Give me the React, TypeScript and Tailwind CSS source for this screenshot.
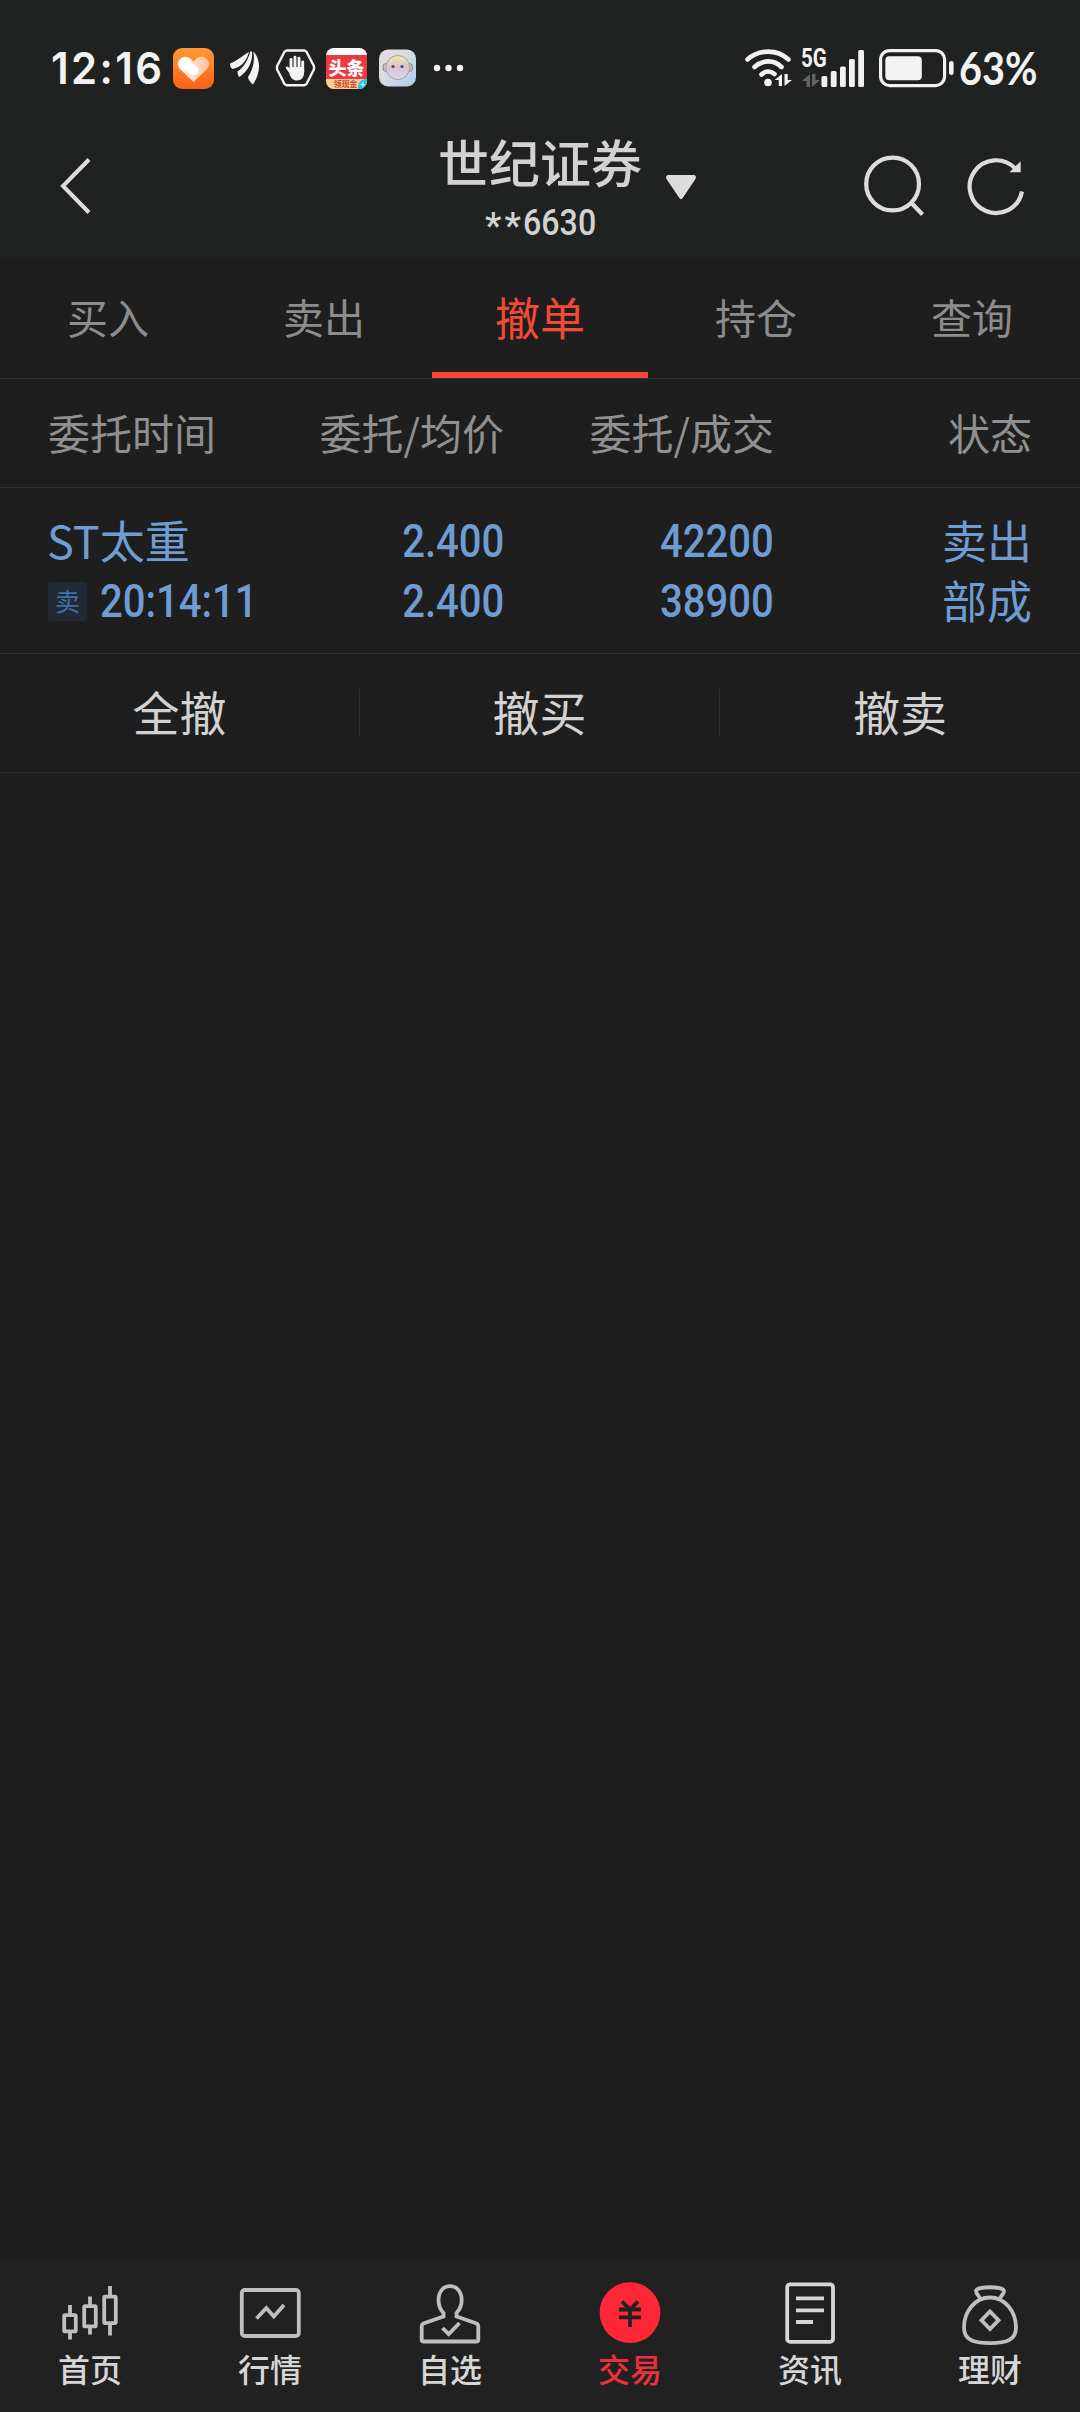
import { ReactNode } from 'react'
import clsx from 'clsx'

const tabs = ['买入', '卖出', '撤单', '持仓', '查询']
const actions = ['全撤', '撤买', '撤卖']

const orders = [
  {
    name: 'ST太重',
    side: '卖',
    time: '20:14:11',
    price: '2.400',
    avgPrice: '2.400',
    amount: '42200',
    filled: '38900',
    action: '卖出',
    status: '部成',
  },
]

function StatusBar() {
  return (
    <div className="flex h-[136px] items-center text-[#f2f2f2]">
      <div className="ml-[51px] w-[122px] shrink-0 whitespace-nowrap font-['Inter'] text-[44px] leading-none font-semibold">
        <span className="inline-block origin-left scale-x-[0.950] tracking-[2.500px]">12:16</span>
      </div>

      {/* health app */}
      <svg className="shrink-0" width="41" height="41" viewBox="0 0 41 41">
        <defs>
          <linearGradient id="health" x1="0" y1="0" x2="0" y2="1">
            <stop offset="0" stopColor="#fd9a34" />
            <stop offset="1" stopColor="#fb6218" />
          </linearGradient>
          <linearGradient id="heart" x1="0" y1="0" x2="1" y2="0">
            <stop offset="0" stopColor="#fff" />
            <stop offset="1" stopColor="#fdc193" />
          </linearGradient>
        </defs>
        <rect width="41" height="41" rx="9" fill="url(#health)" />
        <path
          d="M20.5 34 7.5 21.5C4 18 4 13.500 7.500 10.700c3.500-2.800 8-2.300 10.700.5l2.300 2.300 2.300-2.300c2.700-2.800 7.200-3.300 10.700-.5 3.500 2.800 3.500 7.300 0 10.800z"
          fill="url(#heart)"
        />
        <path d="m11 14 10 8.500" stroke="#fff" strokeWidth="9" strokeLinecap="round" />
      </svg>

      {/* wing */}
      <svg className="ml-4 shrink-0" width="30" height="34" viewBox="0 0 30 34" fill="currentColor">
        <path d="M0 12.500C7 10 12 5 19 .7 17 9 12 16 2.500 18 .5 17 0 15 0 12.500z" />
        <path d="M20.300.5h1.700C23 11 18 20 9.500 26 8 25 7.500 23 7.500 20.500 14 16 18 9 20.300.5z" />
        <path d="M23.300.5C31 8 31 22 23 33.500c-2-1.500-4.500-4-5-7.500C23 19 25 10 23.300.5z" />
      </svg>

      {/* blocked hand */}
      <svg className="ml-[15px] shrink-0" width="41" height="38" viewBox="0 0 41 38" fill="none" stroke="currentColor">
        <path d="M11.500 1.500h18l2 1.200 7.500 14.500v3L31.500 35l-2 1.200h-18l-2-1.200L2 20.200v-3L9.500 2.700z" strokeWidth="2.400" strokeLinejoin="round" />
        <path d="m12.300 19 4.500 6M16 10.500V22M20 8.300V21M24 9.300V21M27.700 13v10" strokeWidth="2.900" strokeLinecap="round" />
        <path d="M14.600 18h14.500v5c0 5.500-2.600 8.400-7 8.400-4.200 0-6-2.200-7.500-6z" fill="currentColor" stroke="none" />
      </svg>

      {/* toutiao */}
      <div className="ml-[10px] h-[41px] w-[41px] shrink-0 overflow-hidden rounded-[8px] bg-[#ec3a40] text-center font-['Noto_Sans_CJK_SC',sans-serif]">
        <div className="h-[7px] bg-white" />
        <div className="h-[24px] text-[18px] leading-[25px] font-black whitespace-nowrap text-white">头条</div>
        <div className="flex h-[10px] bg-[#f8cf98]">
          <span className="flex-1 pl-[7px] text-[8px] leading-[10px] font-bold whitespace-nowrap text-[#cf4526]">领现金</span>
          <span className="h-[12px] w-[9px] rounded-tl-[8px] bg-[#25c5ea] text-[8px] leading-[9px] font-bold text-white">+</span>
        </div>
      </div>

      {/* assistant face */}
      <svg className="ml-3 shrink-0" width="38" height="38" viewBox="0 0 38 38">
        <defs>
          <linearGradient id="faceBg" x1="0" y1="0" x2="1" y2="1">
            <stop offset="0" stopColor="#e6dfd6" />
            <stop offset="0.45" stopColor="#d8dce3" />
            <stop offset="1" stopColor="#a5ccf3" />
          </linearGradient>
          <linearGradient id="face" x1="0" y1="0" x2="0" y2="1">
            <stop offset="0" stopColor="#efe9a6" />
            <stop offset="0.5" stopColor="#d4c5d2" />
            <stop offset="1" stopColor="#d9d6ee" />
          </linearGradient>
        </defs>
        <rect width="37" height="37" y="0.500" rx="9" fill="url(#faceBg)" />
        <ellipse cx="6.500" cy="18.500" rx="2.500" ry="4" fill="#c3c3c8" stroke="#89858a" />
        <ellipse cx="31" cy="18.500" rx="2.500" ry="4" fill="#c3c3c8" stroke="#89858a" />
        <circle cx="18.800" cy="18.500" r="12" fill="url(#face)" stroke="#a5a0a0" />
        <circle cx="14" cy="17.500" r="1.600" fill="#6d4048" />
        <circle cx="23" cy="17.500" r="1.600" fill="#39507a" />
      </svg>

      <svg className="ml-4 shrink-0" width="32" height="8" viewBox="0 0 32 8" fill="currentColor">
        <circle cx="4" cy="4" r="3.200" />
        <circle cx="15.500" cy="4" r="3.200" />
        <circle cx="27" cy="4" r="3.200" />
      </svg>

      {/* wifi */}
      <svg className="ml-auto shrink-0" width="48" height="40" viewBox="0 0 48 40" fill="none" stroke="currentColor">
        <path d="M2.500 11.500C14 1 32 1 43.500 11.500M9.500 19C18 11.500 29 11.500 36.500 19M16.500 26.500c4-3.700 9-3.700 13-.5" strokeWidth="4.600" strokeLinecap="round" />
        <circle cx="23" cy="34.500" r="3.800" fill="currentColor" stroke="none" />
        <path d="M37 26v12h-3.200v-6H29.500zM39.500 38V26h3.200v6H47z" fill="currentColor" stroke="none" />
      </svg>

      {/* mobile signal */}
      <div className="ml-2 flex h-[40px] w-[62px] shrink-0 items-end">
        <div className="w-[20px]">
          <div className="origin-left scale-x-[0.820] font-['Roboto'] text-[25px] leading-[20px] font-bold">5G</div>
          <svg className="mt-[5px]" width="20" height="14" viewBox="0 0 20 14" fill="#626362">
            <path d="M9 0v13H5.500V7H1zM11 13V0h3.500v6H19z" />
          </svg>
        </div>
        <svg className="shrink-0" width="46" height="40" viewBox="0 0 46 40" fill="currentColor">
          <rect x="0.500" y="28" width="5.800" height="11" rx="1.500" />
          <rect x="9.800" y="23" width="5.800" height="16" rx="1.500" />
          <rect x="19" y="18.500" width="5.800" height="20.500" rx="1.500" />
          <rect x="28" y="11" width="5.800" height="28" rx="1.500" />
          <rect x="37.200" y="2" width="5.800" height="37" rx="1.500" />
        </svg>
      </div>

      {/* battery */}
      <svg className="ml-[16px] shrink-0" width="76" height="40" viewBox="0 0 76 40" fill="none">
        <rect x="1.600" y="2.600" width="64" height="35" rx="9" stroke="currentColor" strokeWidth="3.200" />
        <rect x="6.300" y="8.300" width="36.500" height="24" rx="4" fill="currentColor" />
        <rect x="70" y="13" width="4.600" height="14" rx="2.300" fill="currentColor" />
      </svg>
      <div className="mr-[43px] ml-[4px] w-[78px] shrink-0 font-['Lato'] text-[45px] leading-none font-bold">
        <span className="inline-block origin-left scale-x-[0.880]">63%</span>
      </div>
    </div>
  )
}

function Header() {
  return (
    <header className="flex h-[122px] text-[#d2d2d2]">
      <div className="flex h-[100px] w-[400px] items-center pl-[58px]">
        <svg width="34" height="56" viewBox="0 0 34 56" fill="none" stroke="#dcdcdc" strokeWidth="4">
          <path d="M31 1.500 5 28l26 26.500" />
        </svg>
      </div>
      <div className="w-[280px] text-center">
        <div className="h-[54px] text-[51px] leading-[50px] font-medium whitespace-nowrap">世纪证券</div>
        <div className="flex h-[66px] items-center justify-center font-['Roboto'] text-[37px] font-medium">
          <span className="mt-[6px] w-[38px] text-left tracking-[3px]">**</span>
          <span className="w-[72px]">
            <span className="inline-block origin-left scale-x-[0.870]">6630</span>
          </span>
        </div>
      </div>
      <div className="flex h-[98px] flex-1 items-center">
        <svg className="mt-[3px] -ml-[15px]" width="32" height="26" viewBox="0 0 32 26" fill="#dcdcdc">
          <path d="M3.500 1h25c2.500 0 3 2.500 1.800 4.300L17.700 24c-1 1.500-2.400 1.500-3.400 0L1.700 5.300C.5 3.500 1 1 3.500 1z" />
        </svg>
        <svg className="ml-[165px]" width="64" height="64" viewBox="0 0 64 64" fill="none" stroke="#dcdcdc" strokeWidth="4.200">
          <circle cx="30.600" cy="31" r="26.400" />
          <path d="m49.500 50 11 11.500" />
        </svg>
        <svg className="ml-[39px]" width="64" height="64" viewBox="0 0 64 64" fill="none" stroke="#dcdcdc" strokeWidth="4.200">
          <path d="M50.200 15.500A26.400 26.400 0 1 0 57 38.500" />
          <path d="M55.700 8.200v11H44.500z" fill="#dcdcdc" stroke="none" />
        </svg>
      </div>
    </header>
  )
}

// Narrow digits used for prices and amounts
function Num({ children, left }: { children: ReactNode; left?: boolean }) {
  return (
    <span
      className={clsx(
        "inline-block h-[60px] scale-x-[0.870] font-['Roboto'] text-[46px] leading-[61px] font-medium",
        left ? 'origin-left' : 'origin-right'
      )}
    >
      {children}
    </span>
  )
}

const navItems: { label: string; active?: boolean; color: string; icon: ReactNode }[] = [
  {
    label: '首页',
    color: '#bfbfbf',
    icon: (
      <>
        <rect x="10.200" y="35.200" width="11.600" height="16.200" rx="1" />
        <rect x="30.200" y="26.200" width="11.600" height="20.200" rx="1" />
        <rect x="50.200" y="16.700" width="11.600" height="26.400" rx="1" />
        <path d="M16 25v10M16 51.500v8M36 16.500v10M36 46.500v8M56 6v10.500M56 43.500V55.500" />
      </>
    ),
  },
  {
    label: '行情',
    color: '#bfbfbf',
    icon: (
      <>
        <rect x="7.800" y="10" width="57" height="46" rx="3" />
        <path d="M22.500 38.500 32.300 28l7.500 8.500L50 25" />
      </>
    ),
  },
  {
    label: '自选',
    color: '#bfbfbf',
    icon: (
      <>
        <path d="M29.500 37v-4C26 29.500 24.500 25.500 24.500 20 24.500 12 29 6.200 36 6.200S47.700 12 47.700 20c0 5.500-1.700 9.500-5.200 13v3.500L62 43.300q2.300.9 2.300 3.200v13q0 2-2 2H9.700q-2 0-2-2v-13q0-2.300 2.300-3.200L31 36" />
        <path d="m28.500 48 6.200 6L45.500 43" />
      </>
    ),
  },
  {
    label: '交易',
    active: true,
    color: '#212121',
    icon: (
      <>
        <circle cx="36" cy="32.700" r="30.400" fill="#fe2737" stroke="none" />
        <path d="m28 21.500 8 8 8-8M25 29.500h22M25 37.300h22M36 29.500v17.500" />
      </>
    ),
  },
  {
    label: '资讯',
    color: '#d6d6d6',
    icon: (
      <>
        <rect x="13.200" y="4.300" width="45.800" height="57.600" rx="3" />
        <path d="M22 18.300h28M22 30.300h28M22 42h17" />
      </>
    ),
  },
  {
    label: '理财',
    color: '#bfbfbf',
    icon: (
      <>
        <path d="M36 17.500c15 0 26 14 26 30C62 59 54 63.200 36 63.200S10 59 10 47.500c0-16 11-30 26-30z" />
        <path d="M26.500 19.500c-1-3.500-4.500-5.500-4.500-8.500 0-5 28-5 28 0 0 3-3.500 5-4.500 8.500" />
        <path d="m36 31.500 8.500 8.700L36 49l-8.500-8.800z" />
      </>
    ),
  },
]

function BottomNav() {
  return (
    <nav className="grid h-[154px] grid-cols-6 bg-[#212121] pt-[22px]">
      {navItems.map((item) => (
        <div key={item.label} className="flex flex-col items-center">
          <svg width="72" height="68" viewBox="0 0 72 68" fill="none" stroke={item.color} strokeWidth="3.800">
            {item.icon}
          </svg>
          <span
            className={clsx(
              'text-[32px] leading-[40px] font-medium',
              item.active ? 'text-[#ee2f3d]' : 'text-[#d6d6d6]'
            )}
          >
            {item.label}
          </span>
        </div>
      ))}
    </nav>
  )
}

export default function App() {
  return (
    <div className="flex h-[2412px] w-[1080px] flex-col overflow-hidden bg-[#1e1e1e] font-['Noto_Sans_CJK_SC',sans-serif]">
      <div className="bg-[#202221]">
        <StatusBar />
        <Header />
      </div>

      <div className="grid h-[121px] grid-cols-5 border-b border-[#323232]">
        {tabs.map((tab) => (
          <div
            key={tab}
            className={clsx(
              'relative flex items-center justify-center pb-[3px]',
              tab === '撤单' ? 'text-[45px] text-[#f44934]' : 'text-[41px] text-[#8c8c8c]'
            )}
          >
            {tab}
            {tab === '撤单' && <div className="absolute inset-x-0 bottom-0 h-[6px] bg-[#fa4632]" />}
          </div>
        ))}
      </div>

      <div className="grid h-[109px] grid-cols-[226px_230px_270px_258px] items-center border-b border-[#323232] px-12 pb-[4px] text-right text-[42px] text-[#909090]">
        <span className="text-left">委托时间</span>
        <span>委托/均价</span>
        <span>委托/成交</span>
        <span>状态</span>
      </div>

      {orders.map((order) => (
        <div
          key={order.name}
          className="grid h-[166px] grid-cols-[226px_230px_270px_258px] border-b border-[#323232] px-12 pt-[23px] text-right text-[45px] leading-[60px] text-[#6f9cd2]"
        >
          <div className="text-left">
            <div className="-ml-px h-[60px] leading-[57px]">{order.name}</div>
            <div className="flex h-[60px] items-center">
              <span className="mr-[13px] flex h-[39px] w-[39px] shrink-0 items-center justify-center rounded-[3px] bg-[#212934] pb-[2px] text-[25px] text-[#416fa9]">
                {order.side}
              </span>
              <Num left>{order.time}</Num>
            </div>
          </div>
          <div className="flex flex-col items-end">
            <Num>{order.price}</Num>
            <Num>{order.avgPrice}</Num>
          </div>
          <div className="flex flex-col items-end">
            <Num>{order.amount}</Num>
            <Num>{order.filled}</Num>
          </div>
          <div>
            <div className="h-[60px] leading-[57px]">{order.action}</div>
            <div className="h-[60px] leading-[57px]">{order.status}</div>
          </div>
        </div>
      ))}

      <div className="grid h-[119px] grid-cols-3 items-center border-b border-[#323232] text-center text-[47px] text-[#d2d2d2]">
        {actions.map((action) => (
          <div key={action} className="h-[48px] border-r border-[#323232] leading-[44px] last:border-r-0">
            {action}
          </div>
        ))}
      </div>

      <div className="flex-1" />
      <BottomNav />
    </div>
  )
}
